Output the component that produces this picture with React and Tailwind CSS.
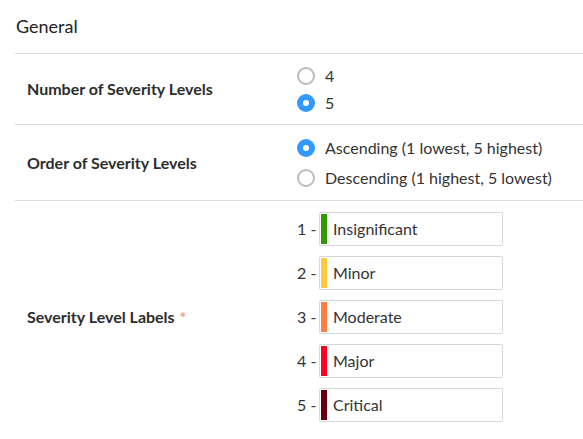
import React, { useState } from 'react';

const levels = [
    { n: 1, label: 'Insignificant', color: 'bg-[#339900]' },
    { n: 2, label: 'Minor', color: 'bg-[#ffc83d]' },
    { n: 3, label: 'Moderate', color: 'bg-[#ff7f40]' },
    { n: 4, label: 'Major', color: 'bg-[#ff0022]' },
    { n: 5, label: 'Critical', color: 'bg-[#660011]' },
];

function Radio({ checked, label, onClick, rowH }) {
    return (
        <label onClick={onClick} className={`flex items-center gap-[10px] cursor-pointer ${rowH}`}>
            {checked ? (
                <span className="flex h-[18px] w-[18px] items-center justify-center rounded-full bg-[#3399ff]">
                    <span className="h-[6px] w-[6px] rounded-full bg-white" />
                </span>
            ) : (
                <span className="h-[18px] w-[18px] rounded-full border-2 border-[#bbbbbb] bg-white" />
            )}
            <span className="text-[16px] text-[#333]">{label}</span>
        </label>
    );
}

export default function App() {
    const [count, setCount] = useState(5);
    const [order, setOrder] = useState('asc');

    return (
        <div className="min-h-screen bg-white pl-[15px] font-['Lato','Liberation_Sans',sans-serif] text-[#333]">
            <div className="flex h-[53px] items-center pl-px text-[18px] text-[#222]">General</div>

            <div className="flex border-t border-[#dcdcdc] py-2">
                <div className="flex w-[282px] items-center pl-3 text-[16px] font-bold text-[#2d2d2d]">
                    Number of Severity Levels
                </div>
                <div className="flex flex-col">
                    <Radio rowH="h-[27px]" checked={count === 4} label="4" onClick={() => setCount(4)} />
                    <Radio rowH="h-[27px]" checked={count === 5} label="5" onClick={() => setCount(5)} />
                </div>
            </div>

            <div className="flex border-t border-[#dcdcdc] pt-[8px] pb-[7px]">
                <div className="flex w-[282px] items-center pl-3 text-[16px] font-bold text-[#2d2d2d]">
                    Order of Severity Levels
                </div>
                <div className="flex flex-col">
                    <Radio rowH="h-[30px]" checked={order === 'asc'} label="Ascending (1 lowest, 5 highest)" onClick={() => setOrder('asc')} />
                    <Radio rowH="h-[30px]" checked={order === 'desc'} label="Descending (1 highest, 5 lowest)" onClick={() => setOrder('desc')} />
                </div>
            </div>

            <div className="flex border-t border-[#dcdcdc] pt-[11px] pb-[23px]">
                <div className="flex w-[282px] items-center pl-3 text-[16px] font-bold text-[#2d2d2d]">
                    Severity Level Labels <span className="ml-[5px] text-[15px] text-[#f4978e]">*</span>
                </div>
                <div className="flex flex-col gap-[10px]">
                    {levels.map(l => (
                        <div key={l.n} className="flex items-center">
                            <span className="w-[22px] text-[16px] text-[#333]">{l.n} -</span>
                            <div className="flex h-[34px] w-[184px] rounded-[2px] border border-[#d9d9d9] p-px">
                                <span className={`w-[6px] ${l.color}`} />
                                <span className="flex items-center pl-[6px] text-[16px] text-[#333]">{l.label}</span>
                            </div>
                        </div>
                    ))}
                </div>
            </div>
        </div>
    );
}
